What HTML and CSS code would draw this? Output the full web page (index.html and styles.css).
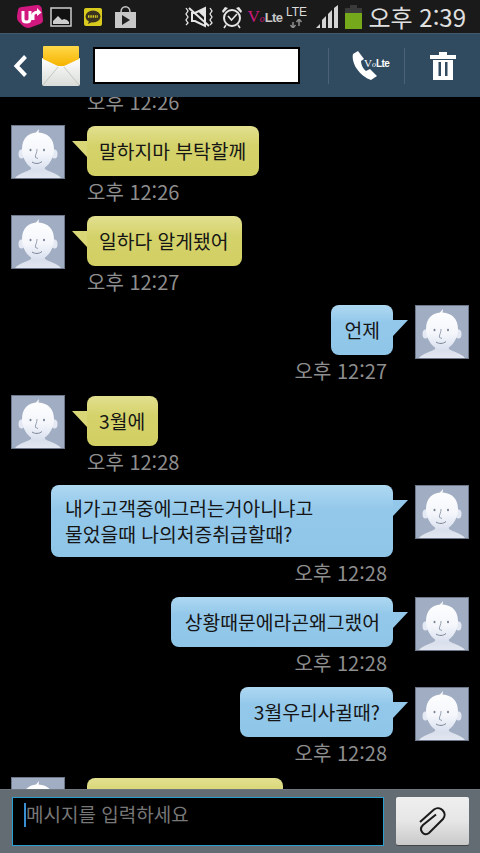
FILE: index.html
```html
<!DOCTYPE html>
<html lang="ko">
<head>
  <meta charset="UTF-8" />
  <meta name="viewport" content="width=device-width, initial-scale=1.0"/>
  <title>메시지</title>
  <link rel="stylesheet" href="styles.css">
</head>
<body>
  <!-- shared avatar -->
  <svg class="defs" width="0" height="0">
    <defs>
      <linearGradient id="face" x1="0" y1="0" x2="0" y2="1">
        <stop offset="0" stop-color="#ffffff"/>
        <stop offset=".6" stop-color="#f4f6fb"/>
        <stop offset="1" stop-color="#d9e0ee"/>
      </linearGradient>
      <linearGradient id="skin" x1="0" y1="0" x2="0" y2="1">
        <stop offset="0" stop-color="#d2d9e6"/>
        <stop offset="1" stop-color="#e2e7f1"/>
      </linearGradient>
      <symbol id="person" viewBox="0 0 54 54">
        <rect width="54" height="54" fill="#6c7889"/>
        <rect x="1" y="1" width="52" height="52" fill="#a1adc2"/>
        <path d="M4 53c4-5 12-6 16-9v-6h14v6c4 3 12 4 16 9z" fill="url(#skin)"/>
        <ellipse cx="10.500" cy="29" rx="3" ry="4.500" fill="#e4e9f4"/>
        <ellipse cx="43.500" cy="29" rx="3" ry="4.500" fill="#e4e9f4"/>
        <path d="M11 24c0-11 7-16 14-16.500L28 4l-.5 3.500C37 8 43 14 43 24c0 11-8 21-16 21s-16-10-16-21z" fill="url(#face)"/>
        <ellipse cx="19.500" cy="25" rx="1" ry="1.300" fill="#7a8597"/>
        <ellipse cx="33" cy="25" rx="1" ry="1.300" fill="#7a8597"/>
        <path d="M26 24c.5 3-2.500 7-1.500 8.500l2.500 1" fill="none" stroke="#7f8a9d" stroke-width=".8"/>
        <path d="M21 37c3 2 7 2 10-.5" fill="none" stroke="#7a8597" stroke-width="1"/>
      </symbol>
    </defs>
  </svg>

  <div class="phone">
    <div class="statusbar">
      <svg class="ic-uplus" width="26" height="23" viewBox="0 0 26 23">
        <path d="M5 2l15-2c3 0 5 2 5 5l1 10c0 2-1 3-3 4l-11 4c-3 0-5-1-7-3l-4-4c-1-2-1-3-1-5l1-6c0-2 2-3 4-3z" fill="#d0187f"/>
        <path d="M6 6v8c0 4 7 4 7 0V6M16 15V10c0-2 3-3 5-2.500" fill="none" stroke="#fff" stroke-width="3"/>
        <path d="M20 3l4.500 4.500L20 11z" fill="#fff"/>
      </svg>
      <svg class="ic-image" width="22" height="20" viewBox="0 0 22 20">
        <rect x="1" y="1" width="20" height="18" fill="#111" stroke="#cdcdcd" stroke-width="1.500"/>
        <path d="M3 17v-3l5-5 4 4 2-1 3 1 2 2v2z" fill="#cdcdcd"/>
      </svg>
      <svg class="ic-kakao" width="18" height="18" viewBox="0 0 18 18">
        <rect width="18" height="18" rx="2" fill="#d8cb1e"/>
        <ellipse cx="9" cy="8.500" rx="7.500" ry="6" fill="#3a3320"/>
        <path d="M5 13l-1 3 4-2z" fill="#3a3320"/>
        <path d="M4 8.500h10" stroke="#d8cb1e" stroke-width="2.500" stroke-dasharray="1.500 .8"/>
      </svg>
      <svg class="ic-store" width="21" height="22" viewBox="0 0 21 22">
        <path d="M6 6c0-7 9-7 9 0" fill="none" stroke="#c8c8c8" stroke-width="1.500"/>
        <path d="M0 6h21v16H0z" fill="#c8c8c8"/>
        <path d="M7 9l8 5-8 5z" fill="#222"/>
      </svg>
      <div class="status-right">
        <svg class="ic-mute" width="28" height="22" viewBox="0 0 28 22">
          <path d="M7 7h3l10-5v18L10 15H7z" fill="#1a1a1a" stroke="#e6e6e6" stroke-width="2"/>
          <path d="M13 5.500L20 2v10z" fill="#e6e6e6"/>
          <path d="M4 2l20 18" stroke="#e6e6e6" stroke-width="2"/>
          <path d="M1 2l2 3-2 3 2 3-2 3 2 3-2 2M25 2l2 3-2 3 2 3-2 3 2 3-2 2" fill="none" stroke="#e6e6e6" stroke-width="1.300"/>
        </svg>
        <svg class="ic-alarm" width="22" height="24" viewBox="0 0 22 24">
          <circle cx="11" cy="13" r="8" fill="none" stroke="#e6e6e6" stroke-width="2"/>
          <path d="M7 11l3.500 4L16 9" fill="none" stroke="#e6e6e6" stroke-width="1.600"/>
          <path d="M1 6l3-4 3 1-5 5zM21 6l-3-4-3 1 5 5z" fill="#e6e6e6"/>
          <path d="M5 20l-2 3M17 20l2 3" stroke="#e6e6e6" stroke-width="1.600"/>
        </svg>
        <span class="volte"><i>V</i><em>o</em><b>Lte</b></span>
        <span class="lte"><b>LTE</b><svg width="14" height="9" viewBox="0 0 14 9"><path d="M4 9V3M1.500 6L4 9l2.500-3M10 7V1M7.500 3L10 0l2.500 3" fill="none" stroke="#8c8c8c" stroke-width="1.500"/></svg></span>
        <svg class="ic-signal" width="22" height="23" viewBox="0 0 22 23">
          <path d="M0 23l4-4v4zM6 23v-8l4-4v12zM12 23V9l4-4v18zM18 23V3l4-3v23z" fill="#d4d4d4"/>
        </svg>
        <svg class="ic-battery" width="17" height="24" viewBox="0 0 17 24">
          <path d="M5 0h7v3H5z" fill="#3a3a3a"/>
          <path d="M0 3h17v7H0z" fill="#3a3a3a"/>
          <path d="M0 8h17v16H0z" fill="#76a81c"/>
        </svg>
        <span class="clock">오후 2:39</span>
      </div>
    </div>

    <header class="topbar">
      <svg class="back" width="15" height="24" viewBox="0 0 15 24">
        <path d="M12.500 2.500L3.500 12l9 9.500" fill="none" stroke="#fff" stroke-width="4"/>
      </svg>
      <svg class="envelope" width="40" height="40" viewBox="0 0 40 40">
        <defs>
          <linearGradient id="flap" x1="0" y1="0" x2="0" y2="1">
            <stop offset="0" stop-color="#ffd84a"/>
            <stop offset="1" stop-color="#f6b400"/>
          </linearGradient>
          <linearGradient id="paper" x1="0" y1="0" x2="0" y2="1">
            <stop offset="0" stop-color="#ffffff"/>
            <stop offset="1" stop-color="#d9dcd8"/>
          </linearGradient>
        </defs>
        <path d="M1 12L20 20 39 12v26a2 2 0 0 1-2 2H3a2 2 0 0 1-2-2z" fill="url(#paper)"/>
        <path d="M2 39L17 21M38 39L23 21" stroke="#c4c7c2" stroke-width="1"/>
        <path d="M3 0h34a1 1 0 0 1 1 1v12L23 20h-6L2 13V1a1 1 0 0 1 1-1z" fill="url(#flap)"/>
      </svg>
      <div class="namebox"></div>
      <div class="sep"></div>
      <div class="call">
        <svg width="25" height="29" viewBox="0 0 25 29">
          <path d="M6 0L1 3C-1 11 6 24 19 29l6-4-7-7-4 2C11 18 9 13 9 10l3-2z" fill="#fff"/>
        </svg>
        <span class="volte small"><i>V</i><em>o</em><b>Lte</b></span>
      </div>
      <div class="sep after-call"></div>
      <svg class="trash" width="26" height="28" viewBox="0 0 26 28">
        <path d="M9 0h8v3h9v4H0V3h9zM3 8h20v20H3z" fill="#fff"/>
        <path d="M8.500 10H11v14H8.500zM15 10h2.500v14H15z" fill="#304a60"/>
      </svg>
    </header>

    <main class="chat">
      <div class="clipped-time">오후 12:26</div>

      <div class="row in">
        <svg class="avatar"><use href="#person"/></svg>
        <div class="msg"><div class="bubble">말하지마 부탁할께</div><div class="time">오후 12:26</div></div>
      </div>
      <div class="row in">
        <svg class="avatar"><use href="#person"/></svg>
        <div class="msg"><div class="bubble">일하다 알게됐어</div><div class="time">오후 12:27</div></div>
      </div>
      <div class="row out">
        <div class="msg"><div class="bubble">언제</div><div class="time">오후 12:27</div></div>
        <svg class="avatar"><use href="#person"/></svg>
      </div>
      <div class="row in">
        <svg class="avatar"><use href="#person"/></svg>
        <div class="msg"><div class="bubble">3월에</div><div class="time">오후 12:28</div></div>
      </div>
      <div class="row out">
        <div class="msg"><div class="bubble long"><span>내가고객중에그러는거아니냐고<br>물었을때 나의처증취급할때?</span></div><div class="time">오후 12:28</div></div>
        <svg class="avatar"><use href="#person"/></svg>
      </div>
      <div class="row out">
        <div class="msg"><div class="bubble">상황때문에라곤왜그랬어</div><div class="time">오후 12:28</div></div>
        <svg class="avatar"><use href="#person"/></svg>
      </div>
      <div class="row out">
        <div class="msg"><div class="bubble">3월우리사귈때?</div><div class="time">오후 12:28</div></div>
        <svg class="avatar"><use href="#person"/></svg>
      </div>
      <div class="row in">
        <svg class="avatar"><use href="#person"/></svg>
        <div class="msg"><div class="bubble wide"></div></div>
      </div>
    </main>

    <footer class="composer">
      <div class="input"><span class="caret"></span><span class="placeholder">메시지를 입력하세요</span></div>
      <button class="attach">
        <svg width="30" height="32" viewBox="0 0 30 32">
          <path d="M2 17L16 4.500C22 0 30 8 25 14L11 28C6 32 0 25 5 20L18 9.500" fill="none" stroke="#1a1a1a" stroke-width="2"/>
        </svg>
      </button>
    </footer>
  </div>
</body>
</html>
```

FILE: styles.css
```css
html, body {
  margin: 0;
  padding: 0;
  height: 100%;
  background: #000;
  overflow: hidden;
}

body {
  font-family: "Noto Sans CJK KR", "Noto Sans", sans-serif;
}

.defs {
  display: block;
  height: 0;
}

.phone {
  width: 480px;
  height: 853px;
  display: flex;
  flex-direction: column;
}

/* status bar */
.statusbar {
  height: 33px;
  flex: none;
  background: #1a1a1a;
  display: flex;
  align-items: center;
  padding-left: 17px;
  box-sizing: border-box;
}

.ic-image { margin-left: 7px; }
.ic-kakao { margin-left: 12px; }
.ic-store { margin-left: 13px; }

.status-right {
  margin-left: auto;
  display: flex;
  align-items: center;
  padding-right: 14px;
}

.ic-alarm { margin-left: 8px; }
.ic-signal { margin-left: 8px; }
.ic-battery { margin-left: 7px; }

.volte {
  margin-left: 4px;
  width: 32px;
  font-family: "Liberation Sans", sans-serif;
  font-size: 13px;
  white-space: nowrap;
  color: #c8c8c8;
}

.volte b {
  letter-spacing: -.6px;
}

.volte i {
  font-family: "Liberation Serif", serif;
  font-size: 17px;
  font-style: normal;
  color: #d0187f;
}

.volte em {
  font-family: "Liberation Serif", serif;
  font-size: 10px;
  color: #d0187f;
}

.volte.small {
  position: absolute;
  left: 12px;
  top: 5px;
  width: auto;
  margin: 0;
  font-size: 10px;
  line-height: 14px;
  color: #fff;
}

.volte.small i,
.volte.small em {
  color: #fff;
  font-size: 11px;
}

.volte.small em {
  font-size: 8px;
}

.lte {
  margin-left: 5px;
  width: 24px;
  display: flex;
  flex-direction: column;
  align-items: center;
  color: #dcdcdc;
  font-family: "Liberation Sans", sans-serif;
  font-size: 12px;
  line-height: 13px;
}

.lte b { font-weight: 400; }

.clock {
  margin-left: 6px;
  font-size: 24px;
  line-height: 30px;
  color: #e0e0e0;
  white-space: nowrap;
}

/* header */
.topbar {
  height: 64px;
  flex: none;
  box-sizing: border-box;
  background: #304a60;
  border-top: 1px solid #42586c;
  display: flex;
  align-items: center;
  padding-left: 13px;
}

.envelope { margin-left: 13px; }

.namebox {
  margin-left: 12px;
  width: 207px;
  height: 37px;
  box-sizing: border-box;
  background: #fff;
  border: 2px solid #000;
}

.sep {
  width: 1px;
  height: 36px;
  background: #4c6276;
  margin-left: 28px;
}

.sep.after-call { margin-left: 2px; }

.call {
  position: relative;
  width: 50px;
  height: 29px;
  margin-left: 23px;
}

.trash { margin-left: 25px; }

/* messages */
.chat {
  flex: 1;
  min-height: 0;
  overflow: hidden;
  display: flex;
  flex-direction: column;
}

.clipped-time {
  height: 37px;
  margin-top: -9px;
  padding-left: 87px;
  flex: none;
  font-size: 20px;
  line-height: 28px;
  color: #8e8e8e;
}

.row {
  flex: none;
  display: flex;
  align-items: flex-start;
}

.row.in {
  padding-left: 11px;
}

.row.out {
  justify-content: flex-end;
  padding-right: 11px;
}

.avatar {
  width: 54px;
  height: 54px;
  flex: none;
}

.msg {
  display: flex;
  flex-direction: column;
}

.in .msg {
  margin-left: 22px;
  margin-top: 1px;
  align-items: flex-start;
}

.out .msg {
  margin-right: 22px;
  align-items: flex-end;
}

.bubble {
  position: relative;
  min-height: 50px;
  box-sizing: border-box;
  display: flex;
  align-items: center;
  border-radius: 8px;
  font-size: 19.300px;
  line-height: 26px;
  color: #151515;
  white-space: nowrap;
}

.in .bubble {
  padding: 10px 13px 10px 12px;
  background: linear-gradient(#e2e08f, #d4d26a 40%, #d2cf63);
}

.out .bubble {
  padding: 10px 13px 10px 14px;
  background: linear-gradient(#aed8f2, #93c8ea 35%, #8fc6e8);
}

.bubble::after {
  content: "";
  position: absolute;
  top: 15px;
  width: 15px;
  height: 16px;
}

.in .bubble::after {
  left: -15px;
  background: #d8d676;
  clip-path: polygon(0 0, 100% 0, 100% 100%);
}

.out .bubble::after {
  right: -15px;
  background: #93c8ea;
  clip-path: polygon(0 0, 100% 0, 0 100%);
}

.bubble.long {
  width: 342px;
}

.bubble.wide {
  width: 196px;
}

.time {
  font-size: 20px;
  line-height: 31px;
  color: #8e8e8e;
}

.in .time {
  height: 39px;
}

.out .time {
  height: 40px;
  margin-right: 6px;
}

/* composer */
.composer {
  height: 64px;
  flex: none;
  box-sizing: border-box;
  background: #636b73;
  border-top: 1px solid #6f777e;
  display: flex;
  align-items: flex-start;
  padding: 7px 11px 0 12px;
  z-index: 1;
}

.input {
  width: 372px;
  height: 49px;
  box-sizing: border-box;
  background: #000;
  border: 1px solid #2a9fd0;
  display: flex;
  padding: 5px 0 0 11px;
}

.caret {
  width: 2px;
  height: 24px;
  background: #3a8fd0;
}

.placeholder {
  font-size: 19px;
  line-height: 22px;
  color: #777;
}

.attach {
  margin-left: 12px;
  width: 73px;
  height: 48px;
  padding: 0;
  border: none;
  border-radius: 2px;
  background: linear-gradient(#efefef, #e6e6e6 50%, #c9c9c9);
  box-shadow: 0 1px 0 #444;
  display: flex;
  align-items: center;
  justify-content: center;
}
```
